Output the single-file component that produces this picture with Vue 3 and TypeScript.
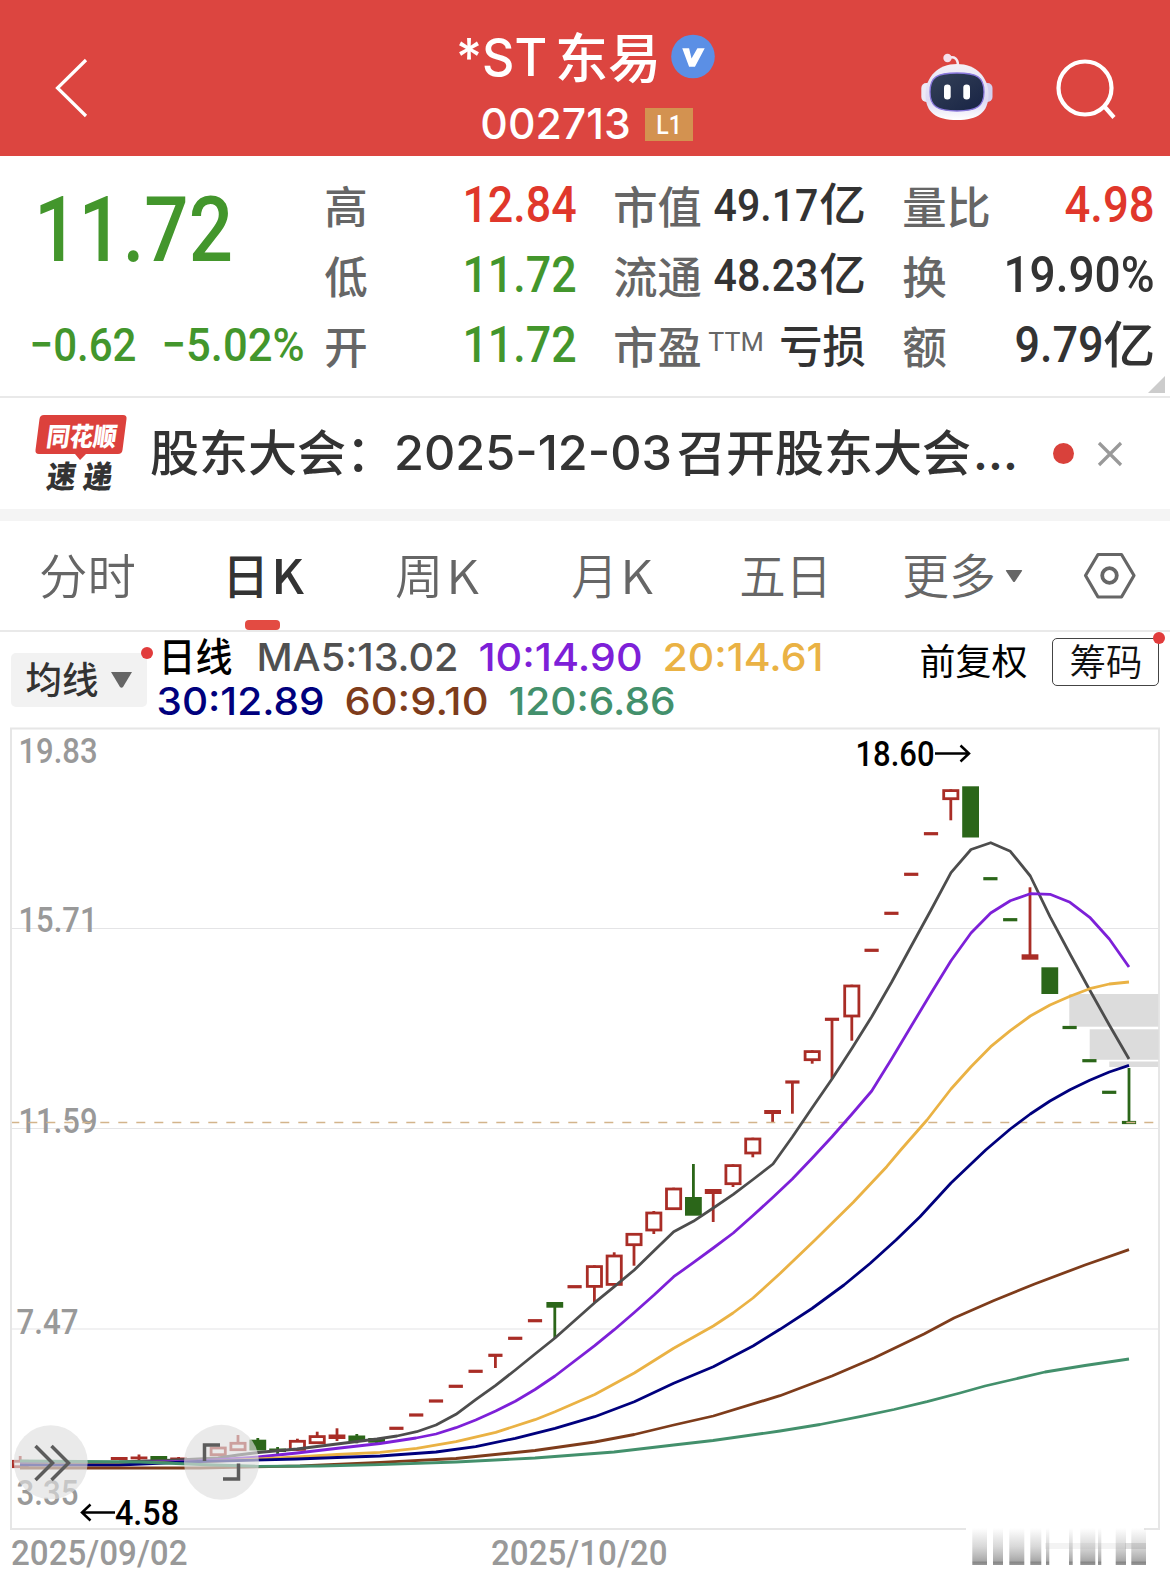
<script setup lang="ts">
import { h, type FunctionalComponent } from 'vue'

type Kind = 'din' | 'sf' | 'cjk' | 'lat'
interface GlyphProps { t: string; w: number; h: number; c?: string; k?: Kind; wt?: number }

const families: Record<Kind, string> = {
  din: 'Roboto, "Noto Sans CJK SC", sans-serif',
  sf: 'Inter, "Noto Sans CJK SC", sans-serif',
  cjk: '"Noto Sans CJK SC", sans-serif',
  lat: '"Noto Sans CJK SC", sans-serif',
}
const capRatio: Record<Kind, number> = { din: 0.711, sf: 0.727, cjk: 0.92, lat: 0.733 }
const sideRatio: Record<Kind, number> = { din: 0.032, sf: 0.04, cjk: 0, lat: 0.04 }

// One line of text whose visible glyphs fill w × h pixels
const T: FunctionalComponent<GlyphProps> = (p) => {
  const kind = p.k ?? 'din'
  const n = p.t.length
  const size = p.h / capRatio[kind]
  const bearing = kind === 'cjk' ? (0.04 * p.w) / (n - 0.08) : size * sideRatio[kind]
  const base = kind === 'cjk' ? p.h * 0.915 : p.h
  return h('svg', { width: p.w, height: p.h, style: 'display:block;overflow:visible;flex:none' }, [
    h('text', {
      x: -bearing, y: base, textLength: p.w + 2 * bearing, lengthAdjust: 'spacingAndGlyphs',
      'font-size': size, 'font-family': families[kind], 'font-weight': p.wt ?? 500, fill: p.c ?? '#333',
    }, p.t),
  ])
}
T.props = ['t', 'w', 'h', 'c', 'k', 'wt']

const GREEN = '#43962c'
const RED = '#e0372b'
const GREY = '#666'

const prices = [
  { label: '高', value: '12.84', color: RED },
  { label: '低', value: '11.72', color: GREEN },
  { label: '开', value: '11.72', color: GREEN },
]
const tabs = [
  { zh: '分时', k: false, left: 41, w: 93, active: false },
  { zh: '日', k: true, left: 89.5, w: 43, active: true },
  { zh: '周', k: true, left: 94.5, w: 44.5, active: false },
  { zh: '月', k: true, left: 96, w: 43, active: false },
  { zh: '五日', k: false, left: 89.5, w: 89, active: false },
  { zh: '更多', k: false, left: 74, w: 90, active: false },
]

// Candles: slot, kind (d dash, o outlined, f filled), colour, body top/bottom, wick high/low
type Candle = [number, 'd' | 'o' | 'f', 'r' | 'g', number, number, number, number]
const candles: Candle[] = [
  [0, 'o', 'r', 1460, 1468, 1456, 1468], [5, 'f', 'r', 1457, 1460, 1457, 1460],
  [6, 'f', 'r', 1456.5, 1459.3, 1454.5, 1461], [7, 'f', 'g', 1456, 1460, 1456, 1460],
  [8, 'f', 'r', 1457.5, 1460, 1457, 1460], [10, 'o', 'r', 1446.7, 1456, 1446.7, 1456],
  [11, 'o', 'r', 1442, 1451, 1435, 1451], [12, 'f', 'g', 1439.7, 1450.5, 1438, 1450],
  [13, 'f', 'g', 1448.5, 1452, 1447, 1454], [14, 'o', 'r', 1440, 1450.7, 1438.7, 1450.7],
  [15, 'o', 'r', 1435.3, 1444, 1431.7, 1444], [16, 'f', 'r', 1434.5, 1439, 1428.3, 1441],
  [17, 'f', 'g', 1435.5, 1441, 1434, 1443.3], [18, 'f', 'g', 1438, 1442.7, 1438, 1443],
  [19, 'd', 'r', 1428.3, 0, 0, 0], [20, 'd', 'r', 1415, 0, 0, 0], [21, 'd', 'r', 1401, 0, 0, 0],
  [22, 'd', 'r', 1386.3, 0, 0, 0], [23, 'd', 'r', 1371.3, 0, 0, 0], [24, 'd', 'r', 1355.3, 0, 1355, 1368],
  [25, 'd', 'r', 1338.3, 0, 0, 0], [26, 'd', 'r', 1320.7, 0, 0, 0], [27, 'f', 'g', 1302, 1307.7, 1302, 1338],
  [28, 'd', 'r', 1286.7, 0, 0, 0], [29, 'o', 'r', 1265.3, 1287.7, 1265.3, 1302.7],
  [30, 'o', 'r', 1254.7, 1285.7, 1252.3, 1285], [31, 'o', 'r', 1233, 1246, 1233, 1265.7],
  [32, 'o', 'r', 1211.7, 1231.3, 1211, 1234], [33, 'o', 'r', 1187.7, 1210, 1187.7, 1210],
  [34, 'f', 'g', 1197, 1215.7, 1164, 1215], [35, 'f', 'r', 1189, 1194, 1189, 1222],
  [36, 'o', 'r', 1164.3, 1185, 1164.3, 1187], [37, 'o', 'r', 1137.7, 1154.3, 1137.7, 1157.3],
  [38, 'f', 'r', 1110, 1114, 1110, 1123], [39, 'd', 'r', 1082, 0, 1082, 1113.7],
  [40, 'o', 'r', 1050.3, 1061, 1050.3, 1063.7], [41, 'd', 'r', 1019.3, 0, 1019.3, 1078.7],
  [42, 'o', 'r', 984.7, 1017.3, 984.7, 1040.7], [43, 'd', 'r', 950.3, 0, 0, 0],
  [44, 'd', 'r', 913.3, 0, 0, 0], [45, 'd', 'r', 874.3, 0, 0, 0], [46, 'd', 'r', 833.7, 0, 0, 0],
  [47, 'o', 'r', 789.3, 800, 789.3, 820.3], [48, 'f', 'g', 786.3, 837.5, 787, 837],
  [49, 'd', 'g', 878.7, 0, 0, 0], [50, 'd', 'g', 919.7, 0, 0, 0], [51, 'f', 'r', 954.3, 959.7, 887.3, 959],
  [52, 'f', 'g', 967.3, 994, 968, 993], [53, 'd', 'g', 1027.5, 0, 0, 0], [54, 'd', 'g', 1060.7, 0, 0, 0],
  [55, 'd', 'g', 1092.3, 0, 0, 0], [56, 'd', 'g', 1122.5, 0, 1068, 1122],
]
const cx = (i: number) => 20.2 + 19.8 * i
const tone = (c: 'r' | 'g') => (c === 'r' ? '#a92d26' : '#2b6619')

const averages = [
  { c: '#4d4d4d', p: '20,1463 119,1462 178,1460 218,1458 238,1455 258,1452.5 297,1449 337,1444 377,1439 397,1436 416.7,1431.7 436,1425 456,1414.3 475.7,1399.7 495.7,1385.3 515.3,1370 535,1354 555,1338 594.7,1302.7 614.3,1286.7 634.3,1270 654,1250.7 673.7,1231.7 693.3,1221.3 713.3,1208 733.3,1194.3 753,1179.5 773,1164 792.3,1137 812,1108 832,1079 852,1048.3 871.7,1016.7 891.7,982 911,946.5 931,910 951,872.7 971,849.5 990.7,842.7 1010.3,851.3 1030.3,876 1050,916.7 1070,954 1089.7,990 1109.3,1025 1129,1059' },
  { c: '#7d20d8', p: '20,1464 119,1463 198,1461 258,1457 297,1453 340,1448 380,1443.5 416,1438 436,1434 456,1427.7 475.7,1420 495.7,1411 515.3,1401.3 535,1389.5 555,1376 594.7,1345.7 614.3,1329.7 634.3,1312.5 654,1295 673.7,1276.7 693.3,1262.7 713.3,1248 733.3,1233 753,1215.5 773,1197.3 792.3,1179 812.3,1158 832,1136.7 852,1114 871.7,1091 891.7,1058.7 911.3,1026 931,993.3 951,960.7 971,933 990.7,913 1010.3,900.7 1030.3,893.7 1050,894.3 1070,902.3 1089.7,917.3 1109.3,939 1129,967' },
  { c: '#eab244', p: '20,1465 198,1462 297,1457 337,1454.5 380,1452.3 416.7,1448.3 456,1441.7 495.7,1432.3 535,1419.7 555,1411.7 594.7,1394.5 634.3,1373 673.7,1348.3 713.3,1326 733,1313 753,1298 780,1273.5 815,1240 853.3,1202.3 886.7,1166.7 900.7,1150 927,1120 951,1089 971,1066.7 990.7,1046.7 1010.3,1030.7 1030.3,1016 1050,1005 1070,996.3 1089.7,988.7 1109.3,984 1129,982' },
  { c: '#00007d', p: '20,1465 119,1465 198,1461.5 297,1459 337,1457.5 380,1456 436,1452 475.7,1446.7 515.3,1438.3 555,1428.3 594.7,1416.7 634.3,1401.7 673.7,1383.3 713.3,1366.7 753,1346 780,1329.3 812,1308.5 844,1285 870,1263.5 896,1240 920,1216.7 951,1183 985.7,1150 1010.3,1129 1030.3,1114 1050,1101 1070,1089.7 1089.7,1080.3 1109.3,1072 1129,1065.3' },
  { c: '#7e3c1b', p: '20,1468 200,1468 300,1466 380,1462.3 456,1458.5 535,1450.5 594.7,1442 634.3,1434.5 673.7,1425 713.3,1416 780,1395.7 832,1376 874,1358 924,1334 954,1318 994,1300.5 1034.6,1284 1085,1265 1129,1249.6' },
  { c: '#43906c', p: '20,1461 140,1462 200,1464.5 258,1466.3 320,1466 380,1464.7 456,1462 535,1458 614,1452 673.7,1445 713,1440.5 780,1431 820,1424.5 860,1416.7 894,1409.5 927,1401.700 960,1393 985,1386 1013,1379.5 1045,1372 1085,1365.5 1129,1359' },
]

const smear: [number, number][] = [
  [972.3, 14.7], [993, 10], [1009.3, 15], [1030.3, 11], [1046, 3.3], [1069, 3.7],
  [1080.3, 15], [1098, 3.3], [1115.7, 10.3], [1131.3, 14.7],
]
</script>

<template>
  <main class="page">
    <header class="bar">
      <svg class="back" width="36" height="64" viewBox="0 0 36 64"><path d="M33 4 4.500 32 33 60" fill="none" stroke="#fff" stroke-width="3.2" /></svg>
      <div class="heading">
        <div class="name">
          <T t="*ST" :w="87" :h="38" k="sf" c="#fff" :wt="500" />
          <T class="zh" t="东易" :w="102" :h="49" k="cjk" c="#fff" />
          <svg width="45" height="45" viewBox="0 0 45 45"><circle cx="22.5" cy="22.5" r="22.3" fill="#5b8fe5" /><path d="M11.500 14h7l2.500 10.500L27 14h7.500L24.500 33h-6z" fill="#fff" /></svg>
        </div>
        <div class="code">
          <T t="002713" :w="147" :h="30.500" k="sf" c="#fff" />
          <span class="level"><T t="L1" :w="24" :h="18" c="#fff" /></span>
        </div>
      </div>
      <svg class="robot" width="74" height="70" viewBox="920 52 74 70">
        <defs>
          <linearGradient id="shell" x1="0" y1="0" x2="0" y2="1"><stop offset="0" stop-color="#f4f1f7" /><stop offset=".65" stop-color="#ddd9f3" /><stop offset="1" stop-color="#fff" /></linearGradient>
          <linearGradient id="glass" x1="0" y1="0" x2="1" y2="1"><stop offset="0" stop-color="#354158" /><stop offset="1" stop-color="#172344" /></linearGradient>
        </defs>
        <path d="M948 58q10-3 10 8" fill="none" stroke="#f5e9f2" stroke-width="2.5" /><circle cx="947.5" cy="58" r="4.2" fill="#f5dfeb" />
        <rect x="921.300" y="83" width="12" height="19" rx="5" fill="#eceaf7" /><rect x="980.500" y="83" width="12" height="19" rx="5" fill="#d4d0ef" />
        <path d="M957 64c19 0 31.500 13 31.500 30.500 0 18-10.500 25.500-31.500 25.500s-31.500-7.500-31.500-25.500C925.500 77 938 64 957 64z" fill="url(#shell)" />
        <path d="M957 73c20 0 27 4 27 19 0 14-7 19-27 19s-27-5-27-19c0-15 7-19 27-19z" fill="url(#glass)" stroke="#8a78dd" stroke-width="1.3" />
        <rect x="944" y="84.5" width="6.7" height="15" rx="3.3" fill="#fff" /><rect x="963.3" y="84.5" width="6.7" height="15" rx="3.3" fill="#fff" />
      </svg>
      <svg class="find" width="62" height="64" viewBox="1055 56 62 64"><circle cx="1085" cy="87" r="26.5" fill="none" stroke="#fff" stroke-width="4.200" /><path d="m1103.5 104.500 10.500 12" stroke="#fff" stroke-width="4.200" /></svg>
    </header>

    <section class="quote">
      <div class="last">
        <T class="big" t="11.72" :w="193" :h="65" :c="GREEN" />
        <div class="change">
          <T t="−0.62" :w="104" :h="33.5" :c="GREEN" /><T t="−5.02%" :w="140" :h="33.5" :c="GREEN" />
        </div>
      </div>
      <div class="col c1">
        <div v-for="p in prices" :key="p.label" class="row"><T :t="p.label" :w="40" :h="41" k="cjk" :c="GREY" /><T :t="p.value" :w="111" :h="36" :c="p.color" /></div>
      </div>
      <div class="col c2">
        <div class="row"><T t="市值" :w="85" :h="41" k="cjk" :c="GREY" /><div class="num"><T t="49.17" :w="102" :h="32" /><T class="yi" t="亿" :w="43" :h="42" k="cjk" /></div></div>
        <div class="row"><T t="流通" :w="85" :h="41" k="cjk" :c="GREY" /><div class="num"><T t="48.23" :w="102" :h="32" /><T class="yi" t="亿" :w="43" :h="42" k="cjk" /></div></div>
        <div class="row"><T t="市盈" :w="85" :h="41" k="cjk" :c="GREY" /><T class="ttm" t="TTM" :w="54" :h="18" :wt="400" :c="GREY" /><T class="loss" t="亏损" :w="83" :h="41" k="cjk" /></div>
      </div>
      <div class="col c3">
        <div class="row"><T t="量比" :w="85" :h="41" k="cjk" :c="GREY" /><T t="4.98" :w="87" :h="36" :c="RED" /></div>
        <div class="row"><T t="换" :w="41" :h="41" k="cjk" :c="GREY" /><T t="19.90%" :w="148" :h="36" /></div>
        <div class="row"><T t="额" :w="41" :h="41" k="cjk" :c="GREY" /><div class="sum"><T t="9.79" :w="86" :h="36" /><T class="yi2" t="亿" :w="48" :h="46" k="cjk" /></div></div>
      </div>
      <svg class="corner" width="17" height="17"><path d="M17 0v17H0z" fill="#ccc" /></svg>
    </section>

    <section class="news">
      <svg class="logo" width="92" height="80" viewBox="35 414 92 80">
        <path d="M44 415h79q4 0 3.500 4l-4 31q-.5 4-4.500 4H86l-6 6-5-6H39q-4 0-3.500-4l4-31q.5-4 4.500-4z" fill="#dc413c" />
        <g font-family="'Noto Sans CJK SC', sans-serif" font-weight="900">
          <text transform="translate(45.500 446) skewX(-8)" font-size="26" textLength="70" lengthAdjust="spacingAndGlyphs" fill="#fff">同花顺</text>
          <text transform="translate(45.500 488) skewX(-8)" font-size="31" textLength="29" lengthAdjust="spacingAndGlyphs" fill="#333">速</text>
          <text transform="translate(82 488) skewX(-8)" font-size="31" textLength="29" lengthAdjust="spacingAndGlyphs" fill="#333">递</text>
        </g>
      </svg>
      <T class="n1" t="股东大会：" :w="241" :h="45" k="cjk" />
      <T class="n2" t="2025-12-03" :w="274" :h="34.5" k="sf" />
      <T class="n3" t="召开股东大会" :w="290" :h="45" k="cjk" />
      <T class="n4" t="..." :w="41" :h="34.5" k="sf" :wt="600" />
      <i class="alert" />
      <svg class="close" width="26" height="26"><path d="M2 2 24 24M24 2 2 24" stroke="#999" stroke-width="3.200" /></svg>
    </section>

    <nav class="tabs">
      <div v-for="t in tabs" :key="t.zh" class="tab" :class="{ active: t.active }" :style="{ marginLeft: t.left + 'px' }">
        <T :t="t.zh" :w="t.w" :h="44" k="cjk" :wt="t.active ? 500 : 350" :c="t.active ? '#333' : '#666'" />
        <T v-if="t.k" class="kay" t="K" :w="29" :h="34.5" k="lat" :wt="t.active ? 500 : 350" :c="t.active ? '#333' : '#666'" />
      </div>
      <svg class="more" width="18" height="14"><path d="M1.500 1h15q1 0 .5 1l-7 10.500q-1 1-2 0L1 2q-.5-1 .5-1z" fill="#666" /></svg>
      <svg class="gear" width="54" height="48" viewBox="1083 552 54 48"><path d="M1098 554.500h23.500l12.500 21-12.500 21.500H1098l-12.500-21.500z" fill="none" stroke="#666" stroke-width="3.200" stroke-linejoin="round" /><circle cx="1109.500" cy="575.500" r="7.300" fill="none" stroke="#666" stroke-width="3.800" /></svg>
    </nav>

    <section class="legend">
      <div class="picker"><T t="均线" :w="70" :h="34" k="cjk" /><svg width="21" height="16"><path d="M0 0h21L12 15q-1.500 1.500-3 0z" fill="#666" /></svg><i class="dot" /></div>
      <div class="lines">
        <div class="line first">
          <T class="day" t="日线" :w="71" :h="36" k="cjk" c="#000" />
          <T t="MA5:13.02" :w="199" :h="28" k="sf" c="#505050" />
          <T t="10:14.90" :w="161" :h="28" k="sf" c="#7d20d8" />
          <T t="20:14.61" :w="158" :h="28" k="sf" c="#eab244" />
        </div>
        <div class="line">
          <T t="30:12.89" :w="165" :h="28" k="sf" c="#00007d" />
          <T t="60:9.10" :w="141" :h="28" k="sf" c="#7e3c1b" />
          <T t="120:6.86" :w="164" :h="28" k="sf" c="#43906c" />
        </div>
      </div>
      <T class="adj" t="前复权" :w="105" :h="33" k="cjk" :wt="400" c="#000" />
      <div class="chips"><T t="筹码" :w="70" :h="34" k="cjk" :wt="350" c="#111" /><i class="dot" /></div>
    </section>

    <svg class="chart" width="1170" height="849" viewBox="0 727 1170 849">
      <defs>
        <linearGradient id="fade" x1="0" y1="1528" x2="0" y2="1565" gradientUnits="userSpaceOnUse"><stop offset="0" stop-color="#999" stop-opacity="0" /><stop offset=".5" stop-color="#999" stop-opacity=".38" /><stop offset=".88" stop-color="#888" stop-opacity=".72" /><stop offset=".93" stop-color="#888" /><stop offset="1" stop-color="#999" /></linearGradient>
        <clipPath id="plot"><rect x="12" y="729" width="1147" height="800" /></clipPath>
      </defs>
      <rect x="11" y="728.500" width="1148" height="800.500" fill="none" stroke="#e6e6e6" stroke-width="2" />
      <path d="M12 928.500H1158M12 1128.500H1158M12 1329H1158" stroke="#e4e4e6" stroke-width="1.200" />
      <g fill="#dcdcdc"><rect x="1069.300" y="994" width="89" height="32.700" /><rect x="1089.700" y="1029.300" width="69" height="30.500" /><rect x="1109.300" y="1061.500" width="49" height="5.500" /></g>
      <g font-family="Roboto, sans-serif" font-weight="500" font-size="34.500" fill="#999">
        <text x="18.500" y="762.500" textLength="79" lengthAdjust="spacingAndGlyphs">19.83</text>
        <text x="18.500" y="932" textLength="79" lengthAdjust="spacingAndGlyphs">15.71</text>
        <text x="18.500" y="1133" textLength="79" lengthAdjust="spacingAndGlyphs">11.59</text>
        <text x="16.500" y="1334" textLength="62" lengthAdjust="spacingAndGlyphs">7.47</text>
        <text x="16.500" y="1504.500" textLength="62" lengthAdjust="spacingAndGlyphs">3.35</text>
        <text x="11" y="1564.500" textLength="176.500" lengthAdjust="spacingAndGlyphs">2025/09/02</text>
        <text x="491" y="1564.500" textLength="176.500" lengthAdjust="spacingAndGlyphs">2025/10/20</text>
      </g>
      <g clip-path="url(#plot)">
        <g v-for="d in candles" :key="d[0]" :stroke="tone(d[2])" :fill="tone(d[2])" stroke-width="0">
          <rect v-if="d[5]" :x="cx(d[0]) - 1.4" :y="d[5]" width="2.800" :height="d[6] - d[5]" />
          <rect v-if="d[1] === 'd'" :x="cx(d[0]) - 7.1" :y="d[3] - 1.6" width="14.200" height="3.200" />
          <rect v-else-if="d[1] === 'f'" :x="cx(d[0]) - 8.4" :y="d[3]" width="16.800" :height="d[4] - d[3]" />
          <rect v-else :x="cx(d[0]) - 7.1" :y="d[3] + 1.3" width="14.200" :height="d[4] - d[3] - 2.6" fill="#fff" stroke-width="2.800" />
        </g>
        <path d="M10.300 1122.500H1158" stroke="#d3b48b" stroke-width="1.400" stroke-dasharray="9 9" />
        <polyline v-for="a in averages" :key="a.c" :points="a.p" fill="none" :stroke="a.c" stroke-width="2.800" stroke-linejoin="round" />
      </g>
      <g font-family="Roboto, sans-serif" font-weight="500" font-size="34.500" fill="#000">
        <text x="855.500" y="765.500" textLength="79" lengthAdjust="spacingAndGlyphs">18.60</text>
        <text x="115" y="1524.500" textLength="64" lengthAdjust="spacingAndGlyphs">4.58</text>
      </g>
      <g fill="none" stroke="#000" stroke-width="2.500"><path d="M935 753.500h34M960.500 745.500l8.500 8-8.500 8" /><path d="M115 1512.500H82M90.500 1504.500l-8.500 8 8.500 8" /></g>
      <g fill="#dedede" fill-opacity=".65"><circle cx="50.700" cy="1462.300" r="37" /><circle cx="221.500" cy="1462.300" r="37.500" /></g>
      <g fill="none" stroke="#5c5c5c" stroke-width="3.500"><path d="m35.500 1446 17 17-17 17M51.500 1446l17 17-17 17" /><path d="M220 1445h-15.500v16M223 1479h15.500v-15.500" /></g>
      <rect x="966" y="1526" width="178" height="5" fill="#fff" />
      <rect x="1045" y="1543" width="101" height="6" fill="#bbb" fill-opacity=".18" />
      <rect x="1125" y="1543" width="21" height="6" fill="#bbb" fill-opacity=".35" />
      <rect v-for="s in smear" :key="s[0]" :x="s[0]" y="1528" :width="s[1]" height="37" fill="url(#fade)" />
    </svg>
  </main>
</template>

<style>
html, body { margin: 0; background: #fff; overflow: hidden; }
</style>

<style scoped>
.page { width: 1170px; height: 1575px; background: #fff; font-family: Inter, "Noto Sans CJK SC", sans-serif; display: flex; flex-direction: column; overflow: hidden; }
.bar { flex: none; height: 155.500px; background: #dc4540; display: flex; align-items: flex-start; }
.back { margin: 56px 0 0 53px; }
.heading { margin-left: 369px; width: 257px; }
.name { display: flex; margin-top: 34px; height: 74px; align-items: flex-start; }
.name > :first-child { margin-top: 4px; }
.name .zh { margin: -1px 12px 0 12px; }
.code { display: flex; margin-left: 23.500px; }
.level { margin-left: 16.500px; width: 48px; height: 33px; background: #d39250; display: flex; align-items: center; justify-content: center; }
.robot { margin: 52px 0 0 205px; }
.find { margin: 56.500px 0 0 61px; }

.quote { position: relative; flex: none; height: 240.500px; border-bottom: 2px solid #e9e9e9; display: flex; }
.last { width: 326px; flex: none; }
.big { margin: 40px 0 66.500px 36.500px; }
.change { display: flex; gap: 28px; margin-left: 31px; }
.col { padding-top: 30.500px; display: flex; flex-direction: column; gap: 29px; flex: none; }
.row { display: flex; height: 41px; justify-content: space-between; align-items: flex-start; }
.c1 { width: 249px; }
.c2 { width: 249px; margin-left: 40px; }
.c3 { width: 249px; margin-left: 40px; }
.num, .sum { display: flex; margin-top: 3px; gap: 4px; }
.sum { margin-top: 0; gap: 3px; }
.yi { margin-top: -6px; }
.yi2 { margin-top: -5px; }
.ttm { margin: 6.500px auto 0 9px; }
.loss { margin-top: -1px; }
.corner { position: absolute; right: 5px; bottom: 3px; }

.news { flex: none; height: 111px; border-bottom: 12px solid #f4f4f4; display: flex; align-items: flex-start; }
.logo { margin: 16px 0 0 35px; }
.n1 { margin: 32px 0 0 25px; }
.n2 { margin: 36.500px 0 0 3px; }
.n3 { margin: 32px 0 0 9px; }
.n4 { margin: 36.500px 0 0 6px; }
.alert { width: 21px; height: 21px; border-radius: 50%; background: #d9413b; margin: 45px 0 0 37px; }
.close { margin: 42.500px 0 0 23px; }

.tabs { flex: none; height: 108.500px; border-bottom: 2px solid #e9e9e9; display: flex; align-items: flex-start; }
.tab { position: relative; display: flex; margin-top: 33px; height: 75px; gap: 6.500px; }
.kay { margin-top: 5px; }
.active::after { content: ""; position: absolute; left: 21px; top: 66px; width: 35px; height: 9.500px; border-radius: 4px; background: #e34b42; }
.more { margin: 48px 0 0 11px; }
.gear { margin: 31px 0 0 60px; }

.legend { flex: none; height: 95px; display: flex; align-items: flex-start; }
.picker { position: relative; width: 120px; height: 54px; margin: 21px 0 0 11px; padding-left: 16px; background: #f2f2f2; border-radius: 5px; display: flex; align-items: center; gap: 14px; }
.picker .dot { position: absolute; right: -6px; top: -6px; }
.dot { width: 12px; height: 12px; border-radius: 50%; background: #e13c3c; }
.lines { margin: 11px 0 0 11px; width: 670px; }
.line { display: flex; gap: 23px; height: 44.500px; align-items: flex-start; }
.first { margin-left: 2px; }
.day { margin: -5px 4px 0 0; }
.adj { margin: 13.500px 0 0 93px; }
.chips { position: relative; box-sizing: border-box; width: 107px; height: 48px; margin: 6px 0 0 26px; border: 1.500px solid #444; border-radius: 5px; display: flex; align-items: center; justify-content: center; }
.chips .dot { position: absolute; right: -7px; top: -7px; }
.chart { flex: none; display: block; }
</style>
